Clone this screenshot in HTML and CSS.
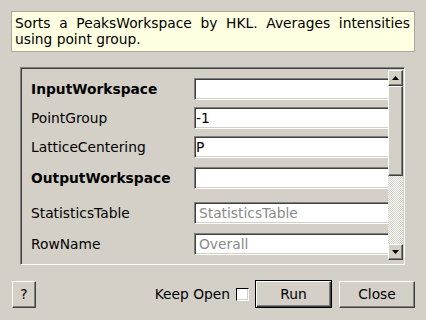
FILE: index.html
```html
<!DOCTYPE html>
<html lang="en">
<head>
    <meta charset="UTF-8">
    <title>SortHKL</title>
    <link rel="stylesheet" href="styles.css">
</head>
<body>
    <div class="summary">Sorts a PeaksWorkspace by HKL. Averages intensities using point group.</div>

    <div class="props">
        <div class="props-view">
            <div class="prop-grid">
                <label class="prop-name required">InputWorkspace</label>
                <input class="prop-input" type="text">
                <label class="prop-name">PointGroup</label>
                <input class="prop-input" type="text" value="-1">
                <label class="prop-name">LatticeCentering</label>
                <input class="prop-input" type="text" value="P">
                <label class="prop-name required">OutputWorkspace</label>
                <input class="prop-input" type="text">
                <label class="prop-name">StatisticsTable</label>
                <input class="prop-input hinted" type="text" placeholder="StatisticsTable">
                <label class="prop-name">RowName</label>
                <input class="prop-input hinted" type="text" placeholder="Overall">
            </div>
        </div>
        <div class="vscroll">
            <div class="sb-btn">
                <svg width="7" height="4" viewBox="0 0 7 4"><path d="M3.5 0 L7 4 L0 4 Z" fill="#000"/></svg>
            </div>
            <div class="sb-handle"></div>
            <div class="sb-track"></div>
            <div class="sb-btn">
                <svg width="7" height="4" viewBox="0 0 7 4"><path d="M0 0 L7 0 L3.5 4 Z" fill="#000"/></svg>
            </div>
        </div>
    </div>

    <div class="actions">
        <button class="btn btn-help">?</button>
        <label class="keep-open">Keep Open <span class="check"></span></label>
        <button class="btn btn-default">Run</button>
        <button class="btn">Close</button>
    </div>
</body>
</html>
```

FILE: styles.css
```css
body {
    margin: 0;
    height: 320px;
    overflow: hidden;
    background-color: #d4d0c8;
    font-family: "DejaVu Sans", sans-serif;
    font-size: 13.8px;
    color: #000;
}
.summary {
    margin: 11px 11px 0 11px;
    padding: 3px 4px 4px 3px;
    height: 32px;
    line-height: 16px;
    background-color: #ffffe1;
    border: 1px solid #a8a59f;
    text-align: justify;
}
.props {
    display: flex;
    margin: 15px 21px 0 20px;
    height: 198px;
    box-sizing: border-box;
    padding: 1px;
    border: 1px solid;
    border-color: #808080 #fff #fff #808080;
    box-shadow: inset 1px 1px 0 #404040;
}
.props-view {
    flex: 1;
    overflow: hidden;
    padding: 9px 0 0 9px;
}
.prop-grid {
    display: grid;
    grid-template-columns: 163px 1fr;
    grid-template-rows: 29px 29px 31px 35px 31px 22px;
    align-items: start;
    margin-right: -10px;
}
.prop-name {
    line-height: 22px;
}
.prop-name.required {
    font-weight: bold;
}
.prop-input {
    height: 22px;
    box-sizing: border-box;
    margin: 0;
    padding: 0 0 0 1px;
    font-family: "DejaVu Sans", sans-serif;
    font-size: 13.8px;
    color: #000;
    background-color: #fff;
    border: 1px solid;
    border-color: #808080 #fff #fff #808080;
    box-shadow: inset 1px 1px 0 #404040, inset -1px -1px 0 #d4d0c8;
    outline: none;
}
.prop-input.hinted {
    padding-left: 4px;
}
.prop-input::placeholder {
    color: #8a8a8a;
}
.vscroll {
    width: 15px;
    margin: 1px 0 3px 0;
    display: flex;
    flex-direction: column;
}
.sb-btn, .sb-handle {
    box-sizing: border-box;
    background-color: #d4d0c8;
    border: 1px solid;
    border-color: #fff #404040 #404040 #fff;
    box-shadow: inset -1px -1px 0 #808080;
}
.sb-btn {
    height: 16px;
    display: flex;
    align-items: center;
    justify-content: center;
}
.sb-handle {
    height: 90px;
}
.sb-track {
    flex: 1;
    background: repeating-conic-gradient(#fff 0 25%, #d4d0c8 0 50%) 0 0 / 2px 2px;
}
.actions {
    display: flex;
    align-items: center;
    margin: 15px 11px 0 12px;
    height: 28px;
}
.btn {
    height: 27px;
    width: 76px;
    box-sizing: border-box;
    padding: 0;
    font-family: "DejaVu Sans", sans-serif;
    font-size: 13.8px;
    color: #000;
    background-color: #d4d0c8;
    border: 1px solid;
    border-color: #fff #404040 #404040 #fff;
    box-shadow: inset -1px -1px 0 #808080;
}
.btn-help {
    width: 24px;
    margin-right: auto;
}
.btn-default {
    width: 77px;
    height: 28px;
    margin-right: 7px;
    border-color: #000;
    box-shadow: inset 1px 1px 0 #fff, inset -1px -1px 0 #404040, inset -2px -2px 0 #808080;
}
.keep-open {
    display: flex;
    align-items: center;
    margin-right: 6px;
}
.check {
    display: inline-block;
    width: 13px;
    height: 13px;
    margin-left: 6px;
    box-sizing: border-box;
    background-color: #fff;
    border: 1px solid;
    border-color: #000 #fff #fff #000;
    box-shadow: inset -1px -1px 0 #d4d0c8;
}
```
